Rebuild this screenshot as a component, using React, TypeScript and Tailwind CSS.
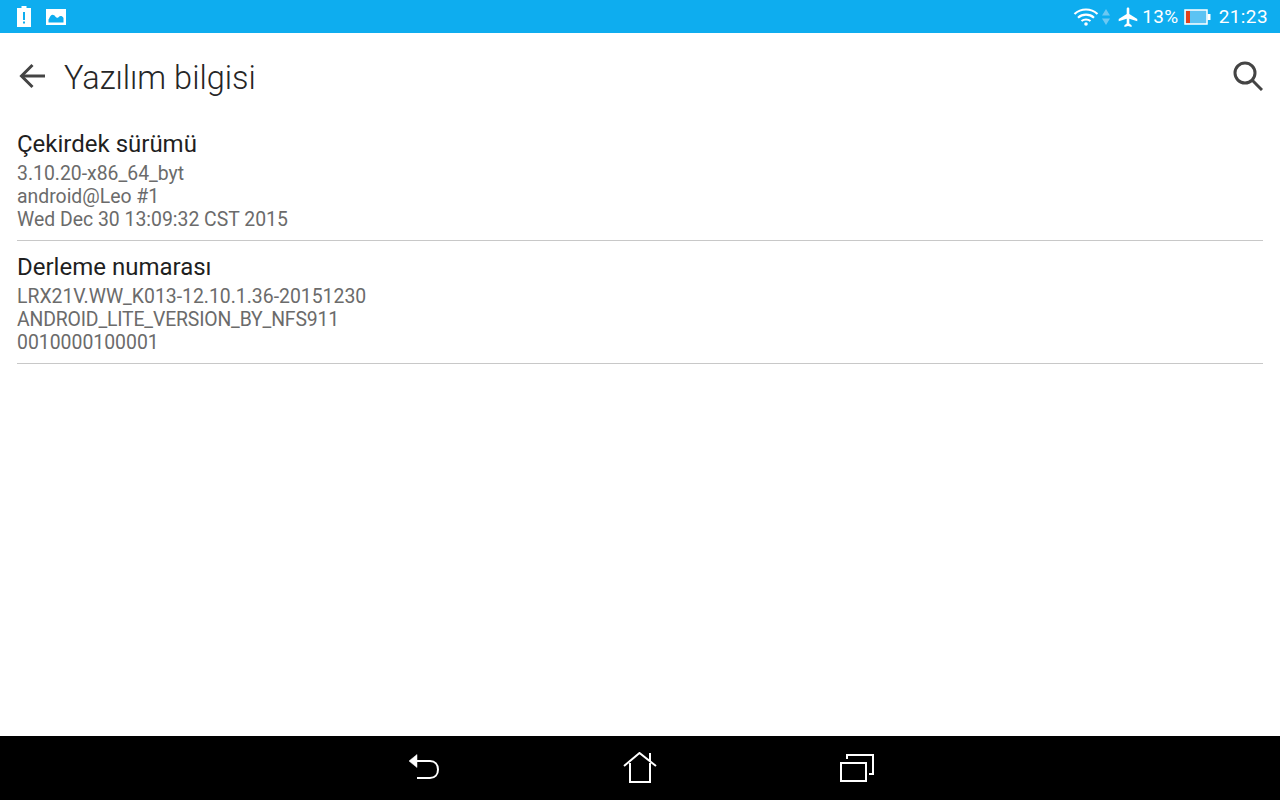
const rows = [
  {
    title: 'Çekirdek sürümü',
    lines: ['3.10.20-x86_64_byt', 'android@Leo #1', 'Wed Dec 30 13:09:32 CST 2015'],
  },
  {
    title: 'Derleme numarası',
    lines: ['LRX21V.WW_K013-12.10.1.36-20151230', 'ANDROID_LITE_VERSION_BY_NFS911', '0010000100001'],
  },
];

const StatusBar = () => (
  <div className="flex h-[33px] shrink-0 items-center justify-between bg-[#0eadef] pl-[17px] pr-[12px] text-white">
    <div className="flex items-center gap-[15px]">
      <svg width="14" height="21" viewBox="0 0 14 21">
        <path d="M4.500 0h5v2H14v19H0V2h4.500z" fill="#fff" />
        <rect x="6" y="6" width="2" height="8" fill="#0eadef" />
        <rect x="6" y="15.500" width="2" height="2" fill="#0eadef" />
      </svg>
      <svg width="20" height="16" viewBox="0 0 20 16">
        <path fillRule="evenodd" d="M0 0h20v16H0zM2.500 13.500h15V9c-1.500-2.500-3.500-2.500-5-.8-1 1-2 .8-3-.5C8 5.500 6 5 4.500 7 3.500 8.500 3 10 2.500 10.500z" fill="#fff" />
      </svg>
    </div>
    <div className="flex items-center">
      <svg width="26" height="20" viewBox="0 0 26 20" fill="none" stroke="#fff" strokeWidth="2.200">
        <path d="M1.500 7c6.500-6 16.500-6 23 0" />
        <path d="M5 10.700c4.500-4 11.500-4 16 0" />
        <path d="M8.500 14c2.500-2 6.500-2 9 0" />
        <circle cx="13" cy="17" r="1.800" fill="#fff" stroke="none" />
      </svg>
      <svg className="ml-[3px]" width="8" height="16" viewBox="0 0 8 16" fill="#6cc8f2">
        <path d="M4 0l4 6.500H0zM4 16L0 9.500h8z" />
      </svg>
      <svg className="ml-[8px]" width="20" height="20" viewBox="0 0 20 20" fill="#fff">
        <path d="M8.700 1.500c0-1.500 2.600-1.500 2.600 0V7l8 5v2.200l-8-2.500v4.800l2.300 1.700V20L10 19l-3.600 1v-1.800l2.300-1.700v-4.800l-8 2.500V12l8-5z" />
      </svg>
      <span className="ml-[4px] text-[19px] leading-none tracking-[0.4px]">13%</span>
      <svg className="ml-[5px]" width="27" height="16" viewBox="0 0 27 16">
        <rect x="1" y="1" width="22" height="14" fill="#5cc3f3" stroke="#fff" strokeWidth="1.500" />
        <rect x="2" y="2" width="4" height="12" fill="#e2401c" />
        <rect x="23.500" y="5" width="3" height="6" fill="#fff" />
      </svg>
      <span className="ml-[8px] text-[19px] leading-none tracking-[0.4px]">21:23</span>
    </div>
  </div>
);

const NavBar = () => (
  <div className="flex h-[64px] shrink-0 items-center justify-center gap-[183px] bg-black pb-[1px] pl-[1px]">
    <svg width="32" height="30" viewBox="0 0 32 30" fill="none" stroke="#fff" strokeWidth="2">
      <path d="M1 8l8-6.500v13z" fill="#fff" strokeWidth="0.500" />
      <path d="M7 8h15c5 0 8 3.500 8 8.500s-3 8.500-8 8.500H9" />
    </svg>
    <svg width="34" height="32" viewBox="0 0 34 32" fill="none" stroke="#fff" strokeWidth="2">
      <path d="M1 14L16.500 1 33 14" />
      <path d="M27 9V1" />
      <path d="M7 11v19h20V11" />
    </svg>
    <svg width="34" height="28" viewBox="0 0 34 28" fill="none" stroke="#fff" strokeWidth="2">
      <rect x="1" y="9" width="25" height="18" />
      <path d="M7 5V1h26v19h-4" />
    </svg>
  </div>
);

export default function App() {
  return (
    <div className="flex h-[800px] w-[1280px] flex-col overflow-hidden bg-white font-['Roboto',sans-serif]">
      <StatusBar />
      <div className="flex-1">
        <div className="flex h-[85px] items-center justify-between pl-[19px] pr-[17px]">
          <div className="flex items-center gap-[19px]">
            <svg width="26" height="26" viewBox="0 0 26 26" fill="none" stroke="#444" strokeWidth="3">
              <path d="M26 13H3" />
              <path d="M13.500 2L2.500 13l11 11" />
            </svg>
            <h1 className="pt-[6px] text-[32.500px] font-light leading-none text-[#262626]">Yazılım bilgisi</h1>
          </div>
          <svg width="30" height="30" viewBox="0 0 30 30" fill="none" stroke="#444" strokeWidth="3">
            <circle cx="12" cy="12" r="10" />
            <path d="M19 19l10 10" />
          </svg>
        </div>
        <div className="mx-[17px]">
          {rows.map((row) => (
            <div key={row.title} className="h-[123px] border-b border-[#c8c8c8] pt-[12px]">
              <div className="text-[24px] leading-[28px] text-[#1f1f1f]">{row.title}</div>
              <div className="pt-[4px] text-[19.400px] leading-[23px] text-[#6b6b6b]">
                {row.lines.map((line) => (
                  <div key={line} className={line.startsWith('ANDROID') ? 'tracking-[-0.16px]' : ''}>
                    {line}
                  </div>
                ))}
              </div>
            </div>
          ))}
        </div>
      </div>
      <NavBar />
    </div>
  );
}
